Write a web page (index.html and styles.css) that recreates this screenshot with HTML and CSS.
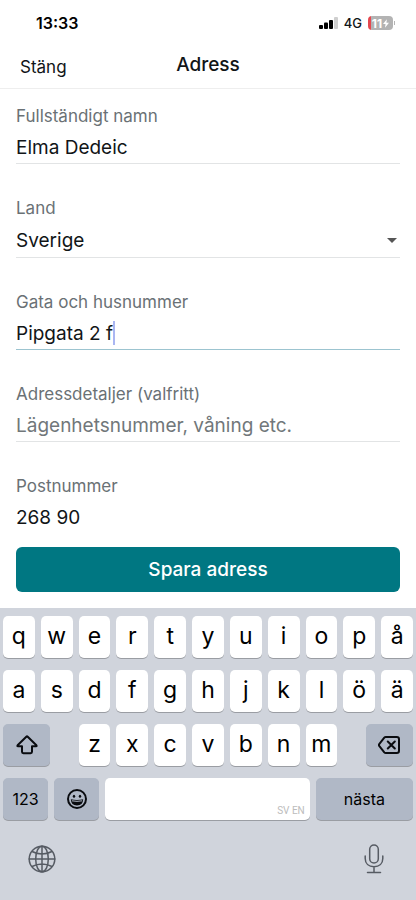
FILE: index.html
```html
<!DOCTYPE html>
<html lang="sv">
<head>
<meta charset="utf-8">
<meta name="viewport" content="width=device-width, initial-scale=1">
<title>Adress</title>
<link rel="stylesheet" href="styles.css">
</head>
<body>
<div class="status">
  <span class="time">13:33</span>
  <div class="indicators">
    <svg class="signal" viewBox="0 0 19 12" aria-hidden="true">
      <rect x="0" y="8" width="4" height="4" rx="1"/>
      <rect x="5" y="5.500" width="4" height="6.500" rx="1"/>
      <rect x="10" y="3" width="4" height="9" rx="1"/>
      <rect class="off" x="15" y="0" width="4" height="12" rx="1"/>
    </svg>
    <span class="network">4G</span>
    <span class="battery">
      <span>11</span>
      <svg class="bolt" viewBox="0 0 7 10" aria-hidden="true"><path d="M4.500 0 0 5.700h3L2.300 10 7 4.200H4z"/></svg>
    </span>
  </div>
</div>

<header class="bar">
  <button class="close" type="button">Stäng</button>
  <h1>Adress</h1>
</header>

<form class="form">
  <div class="fields">
    <div class="field">
      <label for="name">Fullständigt namn</label>
      <input class="control" id="name" type="text" value="Elma Dedeic">
    </div>
    <div class="field">
      <label for="country">Land</label>
      <div class="select">
        <select class="control" id="country"><option>Sverige</option></select>
        <svg class="arrow" viewBox="0 0 10 5" aria-hidden="true"><path d="M0 0h10L5 5z"/></svg>
      </div>
    </div>
    <div class="field">
      <label for="street">Gata och husnummer</label>
      <div class="control active">
        <input class="typed" id="street" type="text" value="Pipgata 2 f">
        <span class="caret"></span>
      </div>
    </div>
    <div class="field">
      <label for="details">Adressdetaljer (valfritt)</label>
      <input class="control" id="details" type="text" placeholder="Lägenhetsnummer, våning etc.">
    </div>
    <div class="field last">
      <label for="zip">Postnummer</label>
      <input class="control" id="zip" type="text" value="268 90">
    </div>
  </div>
  <div class="actions">
    <button class="save" type="button">Spara adress</button>
  </div>
</form>

<div class="keyboard">
  <div class="row">
    <button type="button" class="key">q</button><button type="button" class="key">w</button><button type="button" class="key">e</button><button type="button" class="key">r</button><button type="button" class="key">t</button><button type="button" class="key">y</button><button type="button" class="key">u</button><button type="button" class="key">i</button><button type="button" class="key">o</button><button type="button" class="key">p</button><button type="button" class="key">å</button>
  </div>
  <div class="row">
    <button type="button" class="key">a</button><button type="button" class="key">s</button><button type="button" class="key">d</button><button type="button" class="key">f</button><button type="button" class="key">g</button><button type="button" class="key">h</button><button type="button" class="key">j</button><button type="button" class="key">k</button><button type="button" class="key">l</button><button type="button" class="key">ö</button><button type="button" class="key">ä</button>
  </div>
  <div class="row">
    <button type="button" class="key dark wide" aria-label="Skift">
      <svg width="22" height="20" viewBox="0 0 22 20" aria-hidden="true"><path d="M10.300 1.700 1.600 10.300q-.7.900.4.900h4v5.600q0 1.400 1.400 1.400h7.200q1.400 0 1.400-1.400v-5.600h4q1.100 0 .4-.9L11.700 1.700q-.7-.7-1.400 0z"/></svg>
    </button>
    <button type="button" class="key">z</button><button type="button" class="key">x</button><button type="button" class="key">c</button><button type="button" class="key">v</button><button type="button" class="key">b</button><button type="button" class="key">n</button><button type="button" class="key">m</button>
    <button type="button" class="key dark wide end" aria-label="Radera">
      <svg width="22" height="18" viewBox="0 0 22 18" aria-hidden="true"><path d="M7.800 1h11q2.200 0 2.200 2.200v11.600q0 2.200-2.200 2.200h-11q-.9 0-1.500-.7L1.400 10.200q-1-1.200 0-2.400L6.300 1.700Q6.900 1 7.800 1zM9.800 5.500l7 7M16.800 5.500l-7 7"/></svg>
    </button>
  </div>
  <div class="row bottom">
    <button type="button" class="key dark word">123</button>
    <button type="button" class="key dark" aria-label="Emoji">
      <svg width="20" height="20" viewBox="0 0 20 20" aria-hidden="true"><circle cx="10" cy="10" r="9"/><ellipse class="solid" cx="7" cy="7.300" rx="1.200" ry="1.500"/><ellipse class="solid" cx="13" cy="7.300" rx="1.200" ry="1.500"/><path class="solid" d="M3.800 10.200q6.200 1.600 12.400 0-.3 6.200-6.200 6.200t-6.200-6.200z"/><path class="teeth" d="M5.300 11.900q4.700 1 9.400 0"/></svg>
    </button>
    <button type="button" class="key space">SV EN</button>
    <button type="button" class="key dark word">nästa</button>
  </div>
  <div class="tools">
    <button type="button" class="tool" aria-label="Byt språk">
      <svg width="28" height="28" viewBox="0 0 28 28" aria-hidden="true"><circle cx="14" cy="14" r="12.800"/><ellipse cx="14" cy="14" rx="6.300" ry="12.800"/><path d="M14 1.200v25.600M1.200 14h25.600M4 6.500q10 5 20 0M4 21.500q10-5 20 0"/></svg>
    </button>
    <button type="button" class="tool" aria-label="Diktering">
      <svg width="20" height="30" viewBox="0 0 20 30" aria-hidden="true"><rect x="5.700" y="1" width="8.600" height="18" rx="4.300"/><path d="M1.200 12v2.500c0 5 3.500 8.300 8.800 8.300s8.800-3.300 8.800-8.300V12M10 22.800v5.700M3.500 28.500h13"/></svg>
    </button>
  </div>
</div>
</body>
</html>
```
FILE: styles.css
```css
* {
  box-sizing: border-box;
}

body {
  margin: 0;
  min-height: 100vh;
  display: flex;
  flex-direction: column;
  background: #fff;
  color: #111517;
  font-family: Inter, "Liberation Sans", sans-serif;
}

button,
input,
select {
  margin: 0;
  padding: 0;
  border: 0;
  background: none;
  color: inherit;
  font: inherit;
}

svg {
  display: block;
}

/* Status bar */
.status {
  display: flex;
  align-items: center;
  justify-content: space-between;
  height: 46px;
  padding: 0 23px 0 36px;
}

.time {
  font-size: 16px;
  font-weight: 600;
  color: #000;
}

.indicators {
  display: flex;
  align-items: center;
  gap: 6px;
}

.signal {
  width: 19px;
  height: 12px;
}

.signal .off {
  fill: #cfcfcf;
}

.network {
  font-size: 13px;
  font-weight: 500;
}

.battery {
  position: relative;
  display: flex;
  align-items: center;
  justify-content: center;
  gap: 1px;
  width: 25px;
  height: 14px;
  border-radius: 4px;
  background: linear-gradient(to right, #e5484f 3px, #b3b3b3 3px);
  color: #fff;
  font-size: 12px;
  font-weight: 700;
}

.battery::after {
  content: "";
  position: absolute;
  left: 26px;
  top: 5px;
  width: 1px;
  height: 4px;
  background: #b3b3b3;
}

.bolt {
  width: 6px;
  height: 9px;
  fill: #fff;
}

/* Title bar */
.bar {
  display: grid;
  grid-template-columns: 1fr auto 1fr;
  align-items: center;
  height: 43px;
  padding: 0 20px;
  border-bottom: 1px solid #eee;
}

.close {
  justify-self: start;
  font-size: 17px;
}

.bar h1 {
  margin: 0;
  padding-bottom: 6px;
  font-size: 19px;
  font-weight: 500;
}

/* Form */
.fields {
  display: grid;
  gap: 32px;
  padding: 15px 16px 0;
}

.field label {
  display: block;
  font-size: 17px;
  line-height: 24px;
  color: #6a7175;
}

.control {
  display: block;
  width: 100%;
  height: 36px;
  padding-top: 3px;
  border-bottom: 1px solid #e2e4e5;
  border-radius: 0;
  font-size: 19px;
  outline: 0;
}

.control::placeholder {
  color: #71777a;
  opacity: 1;
}

.select {
  position: relative;
}

.select .control {
  height: 38px;
  appearance: none;
}

.arrow {
  position: absolute;
  right: 3px;
  top: 18px;
  width: 10px;
  height: 5px;
  fill: #555;
}

.active {
  display: flex;
  align-items: center;
  border-bottom-color: #9cc4d0;
}

.typed {
  field-sizing: content;
  outline: 0;
}

.caret {
  width: 2px;
  height: 24px;
  background: #aab6f2;
}

.last .control {
  border-bottom-color: transparent;
}

.actions {
  padding: 13px 16px 16px;
}

.save {
  width: 100%;
  height: 45px;
  border-radius: 6px;
  background: #007782;
  color: #fff;
  font-size: 19px;
  font-weight: 500;
}

/* Keyboard */
.keyboard {
  flex: 1;
  display: flex;
  flex-direction: column;
  gap: 12px;
  padding: 8px 3px 0;
  background: #d0d4dc;
}

.row {
  display: grid;
  grid-template-columns: repeat(11, minmax(0, 1fr));
  gap: 6px;
}

.bottom {
  grid-template-columns: 45fr 45fr 204fr 97fr;
}

.key {
  display: flex;
  align-items: center;
  justify-content: center;
  height: 42px;
  padding-bottom: 3px;
  border-radius: 5px;
  background: #fff;
  box-shadow: 0 1px 0 #9a9da3;
  color: #000;
  font-size: 23px;
}

.key svg,
.tool svg {
  fill: none;
  stroke: #0a0c10;
  stroke-width: 2;
  stroke-linecap: round;
  stroke-linejoin: round;
}

.dark {
  padding: 0;
  background: #b0b8c6;
}

.wide {
  grid-column: span 2;
  width: 68%;
}

.end {
  justify-self: end;
}

.word {
  font-size: 16px;
}

.key .solid {
  fill: #0a0c10;
  stroke: none;
}

.key .teeth {
  stroke: #b0b8c6;
  stroke-width: 1;
}

.space {
  align-items: flex-end;
  justify-content: flex-end;
  padding: 0 5px 4px;
  color: #bcbcbc;
  font-family: Roboto, "Liberation Sans", sans-serif;
  font-size: 10px;
}

.tools {
  display: flex;
  align-items: center;
  justify-content: space-between;
  padding: 12px 29px 24px 25px;
}

.tool svg {
  stroke: #565b63;
  stroke-width: 1.5;
}
```
